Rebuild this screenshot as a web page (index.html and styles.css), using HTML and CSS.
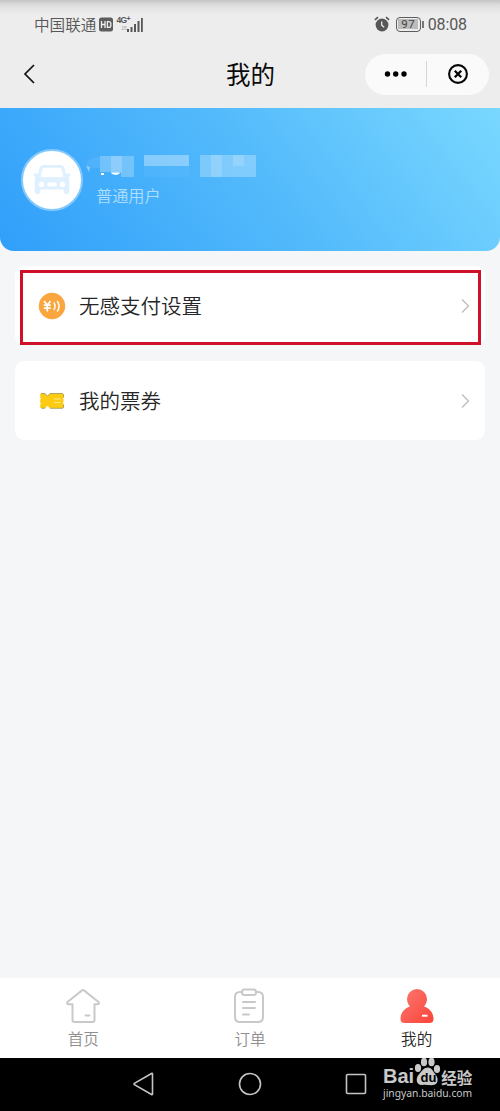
FILE: index.html
```html
<!DOCTYPE html>
<html lang="zh-CN">
<head>
<meta charset="utf-8">
<title>我的</title>
<link rel="stylesheet" href="styles.css">
</head>
<body>
<div class="screen">
  <header class="top">
    <div class="status">
      <span class="carrier">中国联通</span>
      <svg class="hd" width="14" height="15" viewBox="0 0 14 15"><rect y=".5" width="14" height="14" rx="2.5" fill="#5d5d5d"/><path d="M2.500 4v7M6 4v7M2.500 7.500H6M8.400 4.600v5.800h1.400q2 0 2-2V6.600q0-2-2-2z" fill="none" stroke="#eee" stroke-width="1.300"/></svg>
      <span class="network"><b>4G<sup>+</sup></b><i>15</i></span>
      <svg class="signal" width="16" height="15" viewBox="0 0 16 15" fill="#575757"><path d="M0 12h2v3H0zM3.500 10h2v5h-2zM7 7h2v8H7zM10.500 4h2v11h-2zM14 1h1.800v14H14z"/></svg>
      <span class="grow"></span>
      <svg class="alarm" width="16" height="16" viewBox="0 0 16 16"><circle cx="8" cy="9" r="6.400" fill="#575757"/><path d="M.9 3.900 4 1.200M12 1.200l3.100 2.700" stroke="#575757" stroke-width="1.700"/><path d="M7.700 5.500v3.700l2.500 2" fill="none" stroke="#eee" stroke-width="1.300"/></svg>
      <span class="battery">97</span><span class="battery-tip"></span>
      <span class="clock">08:08</span>
    </div>
    <div class="title-bar">
      <svg class="back" width="14" height="22" viewBox="0 0 14 22"><path d="M11 2 2 11l9 9" fill="none" stroke="#111" stroke-width="1.700"/></svg>
      <h1>我的</h1>
      <div class="capsule">
        <svg width="24" height="8" viewBox="0 0 24 8"><circle cx="3.500" cy="4" r="2.700"/><circle cx="11.700" cy="4" r="2.700"/><circle cx="20" cy="4" r="2.700"/></svg>
        <span class="divider"></span>
        <svg width="22" height="22" viewBox="0 0 22 22" fill="none" stroke="#050505"><circle cx="11" cy="11" r="8.900" stroke-width="2.100"/><path d="m7.800 7.800 6.400 6.400M14.200 7.800l-6.400 6.400" stroke-width="2.300"/></svg>
      </div>
    </div>
  </header>

  <section class="profile">
    <div class="avatar">
      <svg width="40" height="32" viewBox="0 0 40 32" fill="#dff1fe"><path fill-rule="evenodd" d="M12 1h16q3.500 0 4.300 3l1.700 6 3-.7q1.500 0 1.500 1.500t-2 2q.8 1 .8 3V28q0 2-2 2h-1.500q-2 0-2-2v-2.500H8.200V28q0 2-2 2H4.700q-2 0-2-2V15.800q0-2 .8-3-2-.5-2-2T3 9.300l3 .7 1.700-6Q8.500 1 12 1zm.3 2.700q-1.500 0-2 1.500L8.700 12q-.2 1 1 1h20.600q1.200 0 1-1l-1.600-6.800q-.5-1.500-2-1.500zM9.500 17.700a2.700 2.700 0 1 0 0 5.400 2.700 2.700 0 0 0 0-5.400zm21 0a2.700 2.700 0 1 0 0 5.400 2.700 2.700 0 0 0 0-5.400zM17 18.400q-2 0-2 2t2 2h6q2 0 2-2t-2-2z"/></svg>
    </div>
    <div class="identity">
      <svg class="masked-name" width="172" height="30" viewBox="0 0 172 30" fill="#fff"><path d="M1 14q1-9 14-9v11H5z" opacity=".07"/><path d="m1 14 4 1-1 5z" opacity=".4"/><path d="M15 4h34v21H36v-5H15z" opacity=".25"/><path d="M26 4h11v17H26z" opacity=".18"/><path d="M59 3h45v11H59z" opacity=".34"/><path d="M59 14h45v11H59z" opacity=".04"/><path d="M115 3h56v22h-56z" opacity=".27"/><path d="M126 3h11v22h-11zM148 3h11v11h-11z" opacity=".15"/><path d="M16 21h3v2h-3zM26 20.500h9l-1 1.500-3 1-4-1z"/></svg>
      <p>普通用户</p>
    </div>
  </section>

  <main class="menu">
    <div class="item">
      <svg class="item-icon" width="28" height="28" viewBox="0 0 28 28"><circle cx="14" cy="14" r="13.200" fill="#faa63f"/><path d="m6 9 3.300 4 3.300-4M9.300 13v6.500M5.800 13.200h7M5.800 16.200h7" fill="none" stroke="#fff" stroke-width="1.700"/><path d="M15.800 10.500q2.500 3.500 0 7.500M19.200 9q3.800 5 0 10.500" fill="none" stroke="#fff" stroke-width="1.500"/></svg>
      <span>无感支付设置</span>
      <svg class="arrow" width="9" height="16" viewBox="0 0 9 16"><path d="m1 1.500 6.500 6.500L1 14.500" fill="none" stroke="#bdbdbd" stroke-width="1.300"/></svg>
      <div class="highlight"></div>
    </div>
    <div class="item">
      <svg class="item-icon" width="28" height="28" viewBox="0 0 28 28"><path d="M2.200 7.500q0-1 1-1H7l2.500 2.700L12 6.500h12q1.500 0 1.500 1.500v2.500l-.8.800.8.900v2.800l-.8.900.8.900V20q0 1.300-1.300 1.300H12l-2.500-2.500L7 21.300H3.500q-1.300 0-1.300-1.300v-2.500l.8-1-.8-1v-3l.8-1-.8-1z" fill="#fccb12"/><path d="M3 6.500h4l2.500 2.700L12 6.500h12.500l1 1v3M25.500 17.500v3l-1 .8H12M7 21.300H3.500" fill="none" stroke="#8f8648" stroke-width=".7"/><path d="M16 12h6.500M16 15.500h6.500" stroke="#ffe98a" stroke-width="1.200"/></svg>
      <span>我的票券</span>
      <svg class="arrow" width="9" height="16" viewBox="0 0 9 16"><path d="m1 1.500 6.500 6.500L1 14.500" fill="none" stroke="#bdbdbd" stroke-width="1.300"/></svg>
    </div>
  </main>

  <nav class="tabs">
    <div class="tab">
      <svg width="36" height="36" viewBox="0 0 36 36" fill="none" stroke="#cbc9c7" stroke-width="2" stroke-linejoin="round" stroke-linecap="round"><path d="M17 2.400q1-.8 2 0L33.500 14q1.200 1.700-.8 2.200H29.500V32q0 2-2 2h-18q-2 0-2-2V16.200H3.300q-2-.5-.8-2.200z"/><path d="M20.500 27.500h4"/></svg>
      <span>首页</span>
    </div>
    <div class="tab">
      <svg class="order" width="36" height="36" viewBox="0 0 36 36" fill="none" stroke="#cbc9c7" stroke-width="2" stroke-linejoin="round" stroke-linecap="round"><path d="M10.500 4H9q-5 0-5 5v20q0 5 5 5h18q5 0 5-5V9q0-5-5-5h-1.500"/><rect x="11" y="1.500" width="14" height="5.500" rx="2.500"/><path d="M12 14h12M12 20h12M12 26.500h6"/></svg>
      <span>订单</span>
    </div>
    <div class="tab active">
      <svg width="36" height="36" viewBox="0 0 36 36"><defs><linearGradient id="person" x1="0" y1="0" x2="1" y2="1"><stop stop-color="#fb7770"/><stop offset="1" stop-color="#fa4539"/></linearGradient></defs><path d="M18 1a10 10 0 0 1 10 10c0 3.500-1.500 5.500-3 7.500C31 20.500 34.500 25 34.500 31q0 4-4 4h-25q-4 0-4-4C1.500 25 5 20.500 11 18.500 9.500 16.500 8 14.500 8 11A10 10 0 0 1 18 1z" fill="url(#person)"/><path d="M23 27.700h5.500" stroke="#fff" stroke-width="2"/></svg>
      <span>我的</span>
    </div>
  </nav>

  <footer class="system">
    <svg width="24" height="26" viewBox="0 0 24 26"><path d="M20.500 2.800v20.400q-.3.700-1 .3L2.400 13.600q-.7-.6 0-1.200L19.500 2.500q.7-.4 1 .3z"/></svg>
    <svg width="24" height="26" viewBox="0 0 24 26"><circle cx="12" cy="13" r="10.500"/></svg>
    <svg width="24" height="26" viewBox="0 0 24 26"><rect x="2.500" y="3.500" width="19" height="19" rx="1"/></svg>
    <div class="watermark">
      <div class="brand"><span>Bai</span><svg width="27" height="29" viewBox="0 0 27 29" fill="#c9c9c9"><ellipse cx="4" cy="11" rx="3.100" ry="4"/><ellipse cx="10" cy="5" rx="3.100" ry="4.300"/><ellipse cx="17.500" cy="5" rx="3.100" ry="4.300"/><ellipse cx="23" cy="12" rx="3.100" ry="4"/><path d="M14 10.500c4 0 5 4 7.500 7 3.500 4 2.500 10-2 10.500-3 .5-8-.5-11 0-6 .500-7-5.500-4.500-9.500C7 15.500 9 10.500 14 10.500z"/><text x="6.500" y="25">du</text></svg><span class="cn">经验</span></div>
      <div class="url">jingyan.baidu.com</div>
    </div>
  </footer>
</div>
</body>
</html>
```
FILE: styles.css
```css
* { box-sizing: border-box; }
body { margin: 0; font-family: "Noto Sans CJK SC", sans-serif; font-weight: 350; }
h1, p { margin: 0; }
svg { display: block; flex: none; }
.screen { display: flex; flex-direction: column; width: 500px; height: 1111px; background: #f5f6f8; overflow: hidden; }

.top { height: 108px; background: linear-gradient(#c4c4c4, #dedede 5px, #ededed 15px); }
.status { display: flex; align-items: center; height: 48px; padding: 0 33px 0 34px; color: #575757; }
.carrier { font-size: 15.600px; line-height: 24px; }
.hd { margin-left: 3px; }
.network { display: flex; flex-direction: column; width: 14px; height: 17px; margin-left: 3px; font: 700 8.500px/9px "Liberation Sans", sans-serif; white-space: nowrap; letter-spacing: -.6px; }
.network b { display: flex; }
.network sup { font-size: 7px; line-height: 5px; }
.network i { align-self: flex-end; padding-right: 4px; font: 6px/6px "Liberation Sans", sans-serif; color: #aaa; }
.signal { margin: 1px 0 0 -3px; }
.grow { flex: 1; }
.battery { width: 25px; height: 15px; margin-left: 6px; border: 1.500px solid #5d5d5d; border-radius: 4px; background: linear-gradient(#bcbcbc, #bcbcbc) center / 20px 10px no-repeat; font: 400 11.500px/13px Roboto, sans-serif; text-align: center; letter-spacing: .4px; color: #444; }
.battery-tip { width: 2px; height: 7px; margin-left: 1px; background: #777; }
.clock { margin-left: 4px; font: 400 16px/20px Roboto, sans-serif; letter-spacing: -.1px; padding-top: 1px; }
.title-bar { display: grid; grid-template-columns: 124px 1fr 124px; align-items: center; height: 52px; padding: 0 11px 0 12px; }
.back { margin-left: 11px; }
h1 { text-align: center; font-size: 24.500px; line-height: 36px; font-weight: 400; color: #0b0b0b; }
.capsule { display: grid; grid-template-columns: 61px 1px 62px; align-items: center; justify-items: center; height: 41px; border-radius: 21px; background: #fafafa; }
.divider { width: 1px; height: 26px; background: #d6d6d6; }

.profile { display: flex; align-items: flex-start; height: 143px; padding: 41px 21px 0; border-radius: 0 0 14px 14px; background: linear-gradient(53deg, #309ffa 0%, #53bafb 52%, #7ad8ff 100%); }
.avatar { display: grid; place-items: center; width: 62px; height: 62px; border: 2px solid #85c9fc; border-radius: 50%; background: #fff; }
.identity { display: flex; flex-direction: column; padding-left: 2px; }
.masked-name { margin-top: 3px; }
.identity p { padding-left: 11px; font-size: 16.200px; line-height: 26px; color: #b0dffe; }

.menu { display: flex; flex-direction: column; flex: 1; gap: 16px; padding: 15px 15px 0; }
.item { position: relative; display: flex; align-items: center; height: 79px; padding: 0 15px 0 23px; border-radius: 9px; background: #fff; }
.item span { flex: 1; padding: 0 0 2px 13px; font-size: 20.500px; line-height: 30px; color: #262626; }
.highlight { position: absolute; inset: 4px 4px 0 5px; border: 3px solid #cf1029; }

.tabs { display: grid; grid-template-columns: repeat(3, 1fr); height: 80px; background: #fff; margin-bottom: 0; }
.tab { display: flex; flex-direction: column; align-items: center; padding-top: 10px; }
.tab .order { margin-right: 1px; }
.tab span { margin-top: 3px; font-size: 15.600px; line-height: 23px; color: #8f8f8f; }
.tab.active span { color: #272727; }

.system { position: relative; display: flex; align-items: flex-start; gap: 82px; height: 53px; padding: 13px 0 0 132px; background: #000; }
.system > svg { fill: none; stroke: #c4c4c4; stroke-width: 1.600; }
.watermark { position: absolute; left: 383px; top: -1px; color: #c9c9c9; }
.brand { display: flex; align-items: flex-end; height: 29px; font: 700 20px/20px "Liberation Sans", sans-serif; }
.brand .cn { padding-bottom: 0; font: 700 15.500px/18px "Noto Sans CJK SC", sans-serif; }
.brand text { font: 700 13px "Liberation Sans", sans-serif; fill: #000; }
.url { font: 400 10.300px/15px "Noto Sans", sans-serif; }
```
